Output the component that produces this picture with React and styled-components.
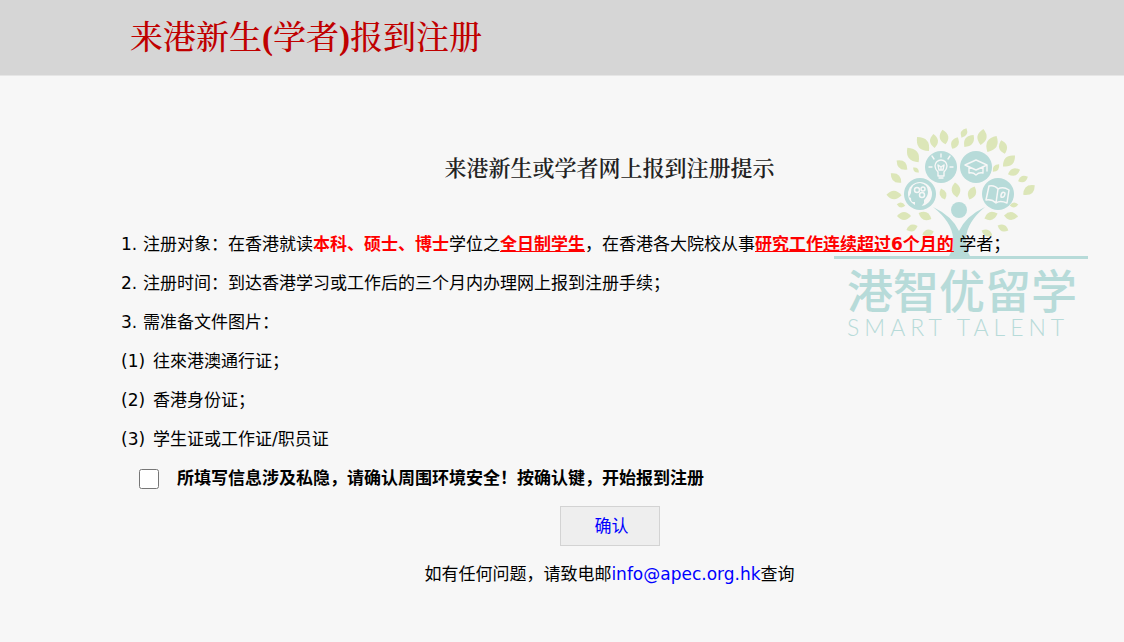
import React, { useState } from "react";
import styled, { createGlobalStyle } from "styled-components";

const GlobalStyle = createGlobalStyle`
  * {
    box-sizing: border-box;
  }
  body {
    margin: 0;
    background: #f7f7f7;
    color: #000;
    font-family: "DejaVu Sans", "Noto Sans CJK SC", sans-serif;
    font-size: 17px;
    line-height: 39px;
  }
`;

const Header = styled.header`
  height: 76px;
  padding: 0 130px;
  background: #d6d6d6;
  border-bottom: 1px solid #e6e6e6;
`;

const Title = styled.h1`
  margin: 0;
  color: #c00000;
  font-family: "Liberation Serif", "Noto Serif CJK SC", "Noto Sans CJK SC", serif;
  font-size: 33px;
  font-weight: 500;
  line-height: 76px;

  b {
    font-weight: bold;
  }
`;

const Main = styled.main`
  position: relative;
  padding: 73px 26px 40px 121px;
`;

const Subtitle = styled.h2`
  margin: 0 0 36px;
  color: #222;
  font-family: "Liberation Serif", "Noto Serif CJK SC", "Noto Sans CJK SC", serif;
  font-size: 22px;
  font-weight: 600;
  line-height: 40px;
  text-align: center;
`;

const Notes = styled.ul`
  position: relative;
  z-index: 1;
  margin: 0;
  padding: 0;
  list-style: none;
`;

const Marker = styled.span`
  display: inline-block;
  width: ${props => (props.$wide ? "32px" : "22px")};
`;

const Strong = styled.strong`
  color: #f00;
  font-weight: bold;
  text-decoration: ${props => (props.$underline ? "underline" : "none")};
`;

const Agree = styled.label`
  display: flex;
  align-items: center;
  gap: 18px;
  padding-left: 18px;
  font-weight: bold;
`;

const Checkbox = styled.input`
  width: 20px;
  height: 20px;
  margin: 0;
`;

const Actions = styled.div`
  display: flex;
  flex-direction: column;
  align-items: center;
  gap: 9px;
  padding-top: 8px;
`;

const Confirm = styled.button`
  width: 100px;
  height: 40px;
  padding: 0 0 0 4px;
  border: 1px solid #d3d3d3;
  background: #eee;
  color: #00f;
  font: inherit;
  line-height: 38px;
`;

const Contact = styled.p`
  margin: 0;

  a {
    color: #00f;
    text-decoration: none;
  }
`;

const Logo = styled.svg`
  position: absolute;
  top: 49px;
  right: 34px;
  width: 256px;
  height: 216px;
`;

const Wordmark = styled.text`
  font-family: Lato, sans-serif;
  font-size: 23px;
  font-weight: 300;
  letter-spacing: 5px;
`;

// x, y, length, angle
const leaves = [
  [93, 24, 17, 50],
  [104, 21, 13, 85],
  [114, 17, 14, 78],
  [125, 23, 12, 115],
  [134, 13, 10, 118],
  [139, 21, 14, 128],
  [152, 17, 15, 100],
  [162, 24, 17, 120],
  [173, 27, 13, 75],
  [83, 35, 17, 52],
  [72, 45, 13, 40],
  [86, 50, 7, 40],
  [66, 58, 13, 42],
  [64, 75, 14, 2],
  [71, 85, 8, 10],
  [74, 96, 13, 0],
  [95, 96, 13, 25],
  [82, 108, 11, 160],
  [98, 113, 11, 165],
  [179, 41, 15, 138],
  [166, 48, 9, 130],
  [184, 52, 12, 160],
  [193, 59, 10, 155],
  [199, 70, 14, 140],
  [184, 85, 8, 175],
  [181, 96, 13, 5],
  [161, 96, 13, 160],
  [173, 108, 11, 25],
  [157, 113, 11, 25],
  [113, 74, 11, 70],
  [126, 70, 14, 82],
  [142, 73, 13, 112]
];

const TreeLogo = () => (
  <Logo viewBox="0 0 256 216" role="img" aria-label="港智优留学 SMART TALENT">
    <g fill="#dce6b8" transform="translate(-4 -5)">
      {leaves.map(([x, y, size, angle]) => (
        <path
          key={`${x}-${y}`}
          transform={`translate(${x} ${y}) rotate(${angle}) scale(${size / 13})`}
          d="M-7 0Q0-8 7 0Q0 8-7 0Z"
        />
      ))}
    </g>
    <g fill="#b7dbd9">
      <circle cx="107" cy="42" r="16" />
      <circle cx="142" cy="42" r="16" />
      <circle cx="86" cy="69" r="16" />
      <circle cx="164" cy="69" r="16" />
      <circle cx="125" cy="85" r="8" />
      <path d="M99 82Q118 91 125 106Q132 91 151 82Q133 97 132 113Q132 127 137 132H114Q119 127 119 113Q118 97 99 82Z" />
      <rect y="131" width="254" height="3" />
    </g>
    <g fill="none" stroke="#f7f7f7" strokeLinecap="round" strokeLinejoin="round">
      <path
        strokeWidth="1.4"
        d="M107 32V29M100 34L98 31M114 34L116 31M98 42H95M116 42H119M104 47Q101 44 101 41A6 6 0 0 1 113 41Q113 44 110 47V51H104ZM105 53H109M105 45L104 40L107 42L110 40L109 45ZM107 42V45"
      />
      <path
        strokeWidth="1.4"
        d="M131 40L142 35L153 40L142 45ZM135 42V48Q139 47 142 50Q145 47 149 48V42M153 40V46"
      />
      <path
        strokeWidth="1.5"
        d="M155 61Q161 60 164 64Q169 61 175 65L173 78Q166 75 162 78Q158 74 152 75ZM164 64L162 78M167 70Q168 66 171 68Q171 73 167 72Z"
      />
    </g>
    <circle cx="86" cy="69" r="12" fill="#f7f7f7" />
    <path
      fill="#b7dbd9"
      d="M81 82V77H79Q77 77 77 73L75 72L77 68Q77 58 86 58Q94 59 94 67Q94 71 90 75V78Q88 81 86 82Z"
    />
    <g fill="none" stroke="#f7f7f7" strokeWidth="1.5">
      <circle cx="83" cy="65" r="2.5" />
      <circle cx="89" cy="64" r="2" />
      <circle cx="88" cy="70" r="2.5" />
    </g>
    <g fill="#b7dbd9">
      <text x="13" y="183" fontSize="46" fontWeight="500" fontFamily="Noto Sans CJK SC, sans-serif">
        港智优留学
      </text>
      <Wordmark x="13" y="211">
        SMART TALENT
      </Wordmark>
    </g>
  </Logo>
);

const App = () => {
  const [checked, setChecked] = useState(false);
  return (
    <>
      <GlobalStyle />
      <Header>
        <Title>
          来港新生<b>(</b>学者<b>)</b>报到注册
        </Title>
      </Header>
      <Main>
        <TreeLogo />
        <Subtitle>来港新生或学者网上报到注册提示</Subtitle>
        <Notes>
          <li>
            <Marker>1.</Marker>注册对象：在香港就读<Strong>本科、硕士、博士</Strong>
            学位之<Strong $underline>全日制学生</Strong>，在香港各大院校从事
            <Strong $underline>研究工作连续超过6个月的</Strong> 学者；
          </li>
          <li>
            <Marker>2.</Marker>注册时间：到达香港学习或工作后的三个月内办理网上报到注册手续；
          </li>
          <li>
            <Marker>3.</Marker>需准备文件图片：
          </li>
          <li>
            <Marker $wide>(1)</Marker>往來港澳通行证；
          </li>
          <li>
            <Marker $wide>(2)</Marker>香港身份证；
          </li>
          <li>
            <Marker $wide>(3)</Marker>学生证或工作证/职员证
          </li>
        </Notes>
        <Agree>
          <Checkbox
            type="checkbox"
            checked={checked}
            onChange={e => setChecked(e.target.checked)}
          />
          所填写信息涉及私隐，请确认周围环境安全！按确认键，开始报到注册
        </Agree>
        <Actions>
          <Confirm type="button">确认</Confirm>
          <Contact>
            如有任何问题，请致电邮<a href="mailto:info@apec.org.hk">info@apec.org.hk</a>查询
          </Contact>
        </Actions>
      </Main>
    </>
  );
};

export default App;
